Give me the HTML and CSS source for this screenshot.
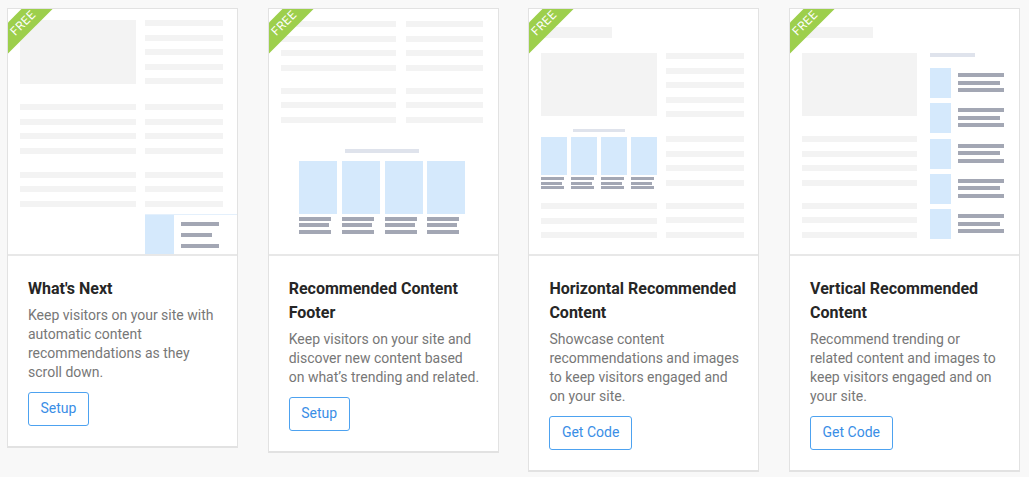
FILE: index.html
```html
<!DOCTYPE html>
<html lang="en">
<head>
<meta charset="utf-8">
<title>Widgets</title>
<link rel="stylesheet" href="styles.css">
</head>
<body>
<div class="grid">

  <div class="card">
    <div class="ribbon">FREE</div>
    <div class="preview p1">
      <div class="col">
        <div class="block"></div>
        <div class="lines g20"><i></i><i></i><i></i><i></i></div>
        <div class="lines g18"><i></i><i></i><i></i></div>
      </div>
      <div class="col">
        <div class="lines"><i></i><i></i><i></i><i></i><i></i></div>
        <div class="lines g20"><i></i><i></i><i></i><i></i></div>
        <div class="lines g18"><i></i><i></i><i></i></div>
        <div class="widget">
          <div class="wsq"></div>
          <div class="wlines"><i></i><i class="short"></i><i></i></div>
        </div>
      </div>
    </div>
    <div class="body">
      <h3 class="title">What's Next</h3>
      <p class="desc">Keep visitors on your site with automatic content recommendations as they scroll down.</p>
      <a class="btn">Setup</a>
    </div>
  </div>

  <div class="card">
    <div class="ribbon">FREE</div>
    <div class="preview p2">
      <div class="twocol">
        <div class="col">
          <div class="lines"><i></i><i></i><i></i><i></i></div>
          <div class="lines g17"><i></i><i></i><i></i></div>
        </div>
        <div class="col">
          <div class="lines"><i></i><i></i><i></i><i></i></div>
          <div class="lines g17"><i></i><i></i><i></i></div>
        </div>
      </div>
      <div class="thinbar tb2"></div>
      <div class="tiles t2">
        <div class="tile"><div class="pic"></div><div class="caps"><i></i><i class="short"></i><i></i></div></div>
        <div class="tile"><div class="pic"></div><div class="caps"><i></i><i class="short"></i><i></i></div></div>
        <div class="tile"><div class="pic"></div><div class="caps"><i></i><i class="short"></i><i></i></div></div>
        <div class="tile"><div class="pic"></div><div class="caps"><i></i><i class="short"></i><i></i></div></div>
      </div>
    </div>
    <div class="body">
      <h3 class="title">Recommended Content Footer</h3>
      <p class="desc">Keep visitors on your site and discover new content based on what’s trending and related.</p>
      <a class="btn">Setup</a>
    </div>
  </div>

  <div class="card">
    <div class="ribbon">FREE</div>
    <div class="preview p3">
      <div class="header"></div>
      <div class="twocol c3">
        <div class="col">
          <div class="block b63"></div>
          <div class="thinbar tb3"></div>
          <div class="tiles t3">
            <div class="tile"><div class="pic"></div><div class="caps"><i></i><i class="short"></i><i></i></div></div>
            <div class="tile"><div class="pic"></div><div class="caps"><i></i><i class="short"></i><i></i></div></div>
            <div class="tile"><div class="pic"></div><div class="caps"><i></i><i class="short"></i><i></i></div></div>
            <div class="tile"><div class="pic"></div><div class="caps"><i></i><i class="short"></i><i></i></div></div>
          </div>
          <div class="lines g14"><i></i><i></i><i></i></div>
        </div>
        <div class="col">
          <div class="lines"><i></i><i></i><i></i><i></i><i></i></div>
          <div class="lines g19"><i></i><i></i><i></i><i></i></div>
          <div class="lines g17"><i></i><i></i><i></i></div>
        </div>
      </div>
    </div>
    <div class="body">
      <h3 class="title">Horizontal Recommended Content</h3>
      <p class="desc">Showcase content recommendations and images to keep visitors engaged and on your site.</p>
      <a class="btn">Get Code</a>
    </div>
  </div>

  <div class="card">
    <div class="ribbon">FREE</div>
    <div class="preview p4">
      <div class="header"></div>
      <div class="twocol c4">
        <div class="col">
          <div class="block b63"></div>
          <div class="lines g20"><i></i><i></i><i></i><i></i></div>
          <div class="lines g17"><i></i><i></i><i></i></div>
        </div>
        <div class="col">
          <div class="thinbar tb4"></div>
          <div class="vlist">
            <div class="vrow"><div class="vsq"></div><div class="vlines"><i></i><i class="short"></i><i></i></div></div>
            <div class="vrow"><div class="vsq"></div><div class="vlines"><i></i><i class="short"></i><i></i></div></div>
            <div class="vrow"><div class="vsq"></div><div class="vlines"><i></i><i class="short"></i><i></i></div></div>
            <div class="vrow"><div class="vsq"></div><div class="vlines"><i></i><i class="short"></i><i></i></div></div>
            <div class="vrow"><div class="vsq"></div><div class="vlines"><i></i><i class="short"></i><i></i></div></div>
          </div>
        </div>
      </div>
    </div>
    <div class="body">
      <h3 class="title">Vertical Recommended Content</h3>
      <p class="desc">Recommend trending or related content and images to keep visitors engaged and on your site.</p>
      <a class="btn">Get Code</a>
    </div>
  </div>

</div>
</body>
</html>
```

FILE: styles.css
```css
* { box-sizing: border-box; }

html, body {
  margin: 0;
  background: #f8f8f8;
  font-family: Roboto, "Liberation Sans", sans-serif;
}

.grid {
  display: grid;
  grid-template-columns: repeat(4, 231px);
  column-gap: 29.7px;
  align-items: start;
  padding: 8px 0 0 7px;
}

.card {
  position: relative;
  overflow: hidden;
  background: #fff;
  border: 1px solid #e2e2e2;
  border-bottom-width: 2px;
}

.ribbon {
  position: absolute;
  left: -27px;
  top: 3px;
  width: 84px;
  height: 22px;
  background: #9dcf4c;
  color: #fff;
  font-size: 12px;
  line-height: 22px;
  letter-spacing: 0.5px;
  text-align: center;
  transform: rotate(-45deg);
  z-index: 2;
}

/* ---------- previews ---------- */
.preview {
  height: 247px;
  border-bottom: 2px solid #e8e8e8;
  overflow: hidden;
}

.col { display: flex; flex-direction: column; }

.lines { display: flex; flex-direction: column; gap: 8.5px; }
.lines i { display: block; height: 6px; background: #f3f3f3; }
.g20 { margin-top: 20px; }
.g19 { margin-top: 19px; }
.g18 { margin-top: 18px; }
.g17 { margin-top: 17px; }
.g14 { margin-top: 14px; }

.block { height: 64px; background: #f3f3f3; }
.block.b63 { height: 63px; }

.header { width: 71px; height: 11px; background: #f3f3f3; }

.thinbar { background: #dfe3ec; }

/* card 1 */
.p1 {
  display: grid;
  grid-template-columns: 116px 78px;
  column-gap: 9px;
  align-items: start;
  padding: 11px 14px 0 12px;
}
.widget {
  display: flex;
  margin: 7px -14px 0 0;
  height: 41px;
  border-top: 1px solid #e4f0fc;
}
.wsq { width: 29px; background: #d5e9fc; }
.wlines { display: flex; flex-direction: column; gap: 7px; padding: 7px 0 0 7px; }
.wlines i { display: block; width: 38px; height: 4px; background: #a3a7b4; }
.wlines i.short { width: 31px; }

/* card 2 */
.p2 { padding: 12px 14px 0 12px; }
.twocol { display: grid; align-items: start; }
.p2 .twocol { grid-template-columns: 115px 77px; column-gap: 10px; }
.tb2 { width: 74px; height: 4px; margin: 26px auto 0; }
.tiles { display: grid; justify-content: center; }
.t2 { grid-template-columns: repeat(4, 38px); column-gap: 4.7px; margin-top: 8px; }
.t2 .pic { height: 53px; background: #d5e9fc; }
.caps { display: flex; flex-direction: column; }
.caps i { display: block; background: #a3a7b4; }
.t2 .caps { margin-top: 3px; gap: 2.5px; }
.t2 .caps i { width: 32px; height: 4px; }
.t2 .caps i.short { width: 30px; }

/* card 3 */
.p3, .p4 { padding: 18px 14px 0 12px; }
.c3 { grid-template-columns: 116px 78px; column-gap: 9px; margin-top: 15px; }
.tb3 { width: 52px; height: 3px; margin: 13px auto 0; }
.t3 { grid-template-columns: repeat(4, 26px); column-gap: 4px; margin-top: 5px; }
.t3 .pic { height: 38px; background: #d5e9fc; }
.t3 .caps { margin-top: 2px; gap: 1.5px; }
.t3 .caps i { width: 23px; height: 3px; }
.t3 .caps i.short { width: 21px; }

/* card 4 */
.c4 { grid-template-columns: 115px 74px; column-gap: 13px; margin-top: 15px; }
.tb4 { width: 45px; height: 4px; }
.vlist { display: flex; flex-direction: column; gap: 5.25px; margin-top: 11px; }
.vrow { display: flex; height: 30px; }
.vsq { width: 21px; background: #d5e9fc; }
.vlines { display: flex; flex-direction: column; gap: 3.5px; padding: 5px 0 0 7px; }
.vlines i { display: block; width: 46px; height: 4px; background: #a3a7b4; }
.vlines i.short { width: 42px; }

/* ---------- body ---------- */
.body { padding: 21px 17px 20px 20px; }

.title {
  margin: 0;
  font-size: 16px;
  line-height: 24px;
  font-weight: 700;
  color: #262626;
}

.desc {
  margin: 5px 0 0;
  font-size: 14px;
  line-height: 19px;
  color: #777;
}

.btn {
  display: inline-block;
  margin-top: 10px;
  padding: 7px 11.5px 8px;
  font-size: 14px;
  line-height: 17px;
  color: #3a8ee6;
  border: 1px solid #4da2f0;
  border-radius: 3px;
}
```
